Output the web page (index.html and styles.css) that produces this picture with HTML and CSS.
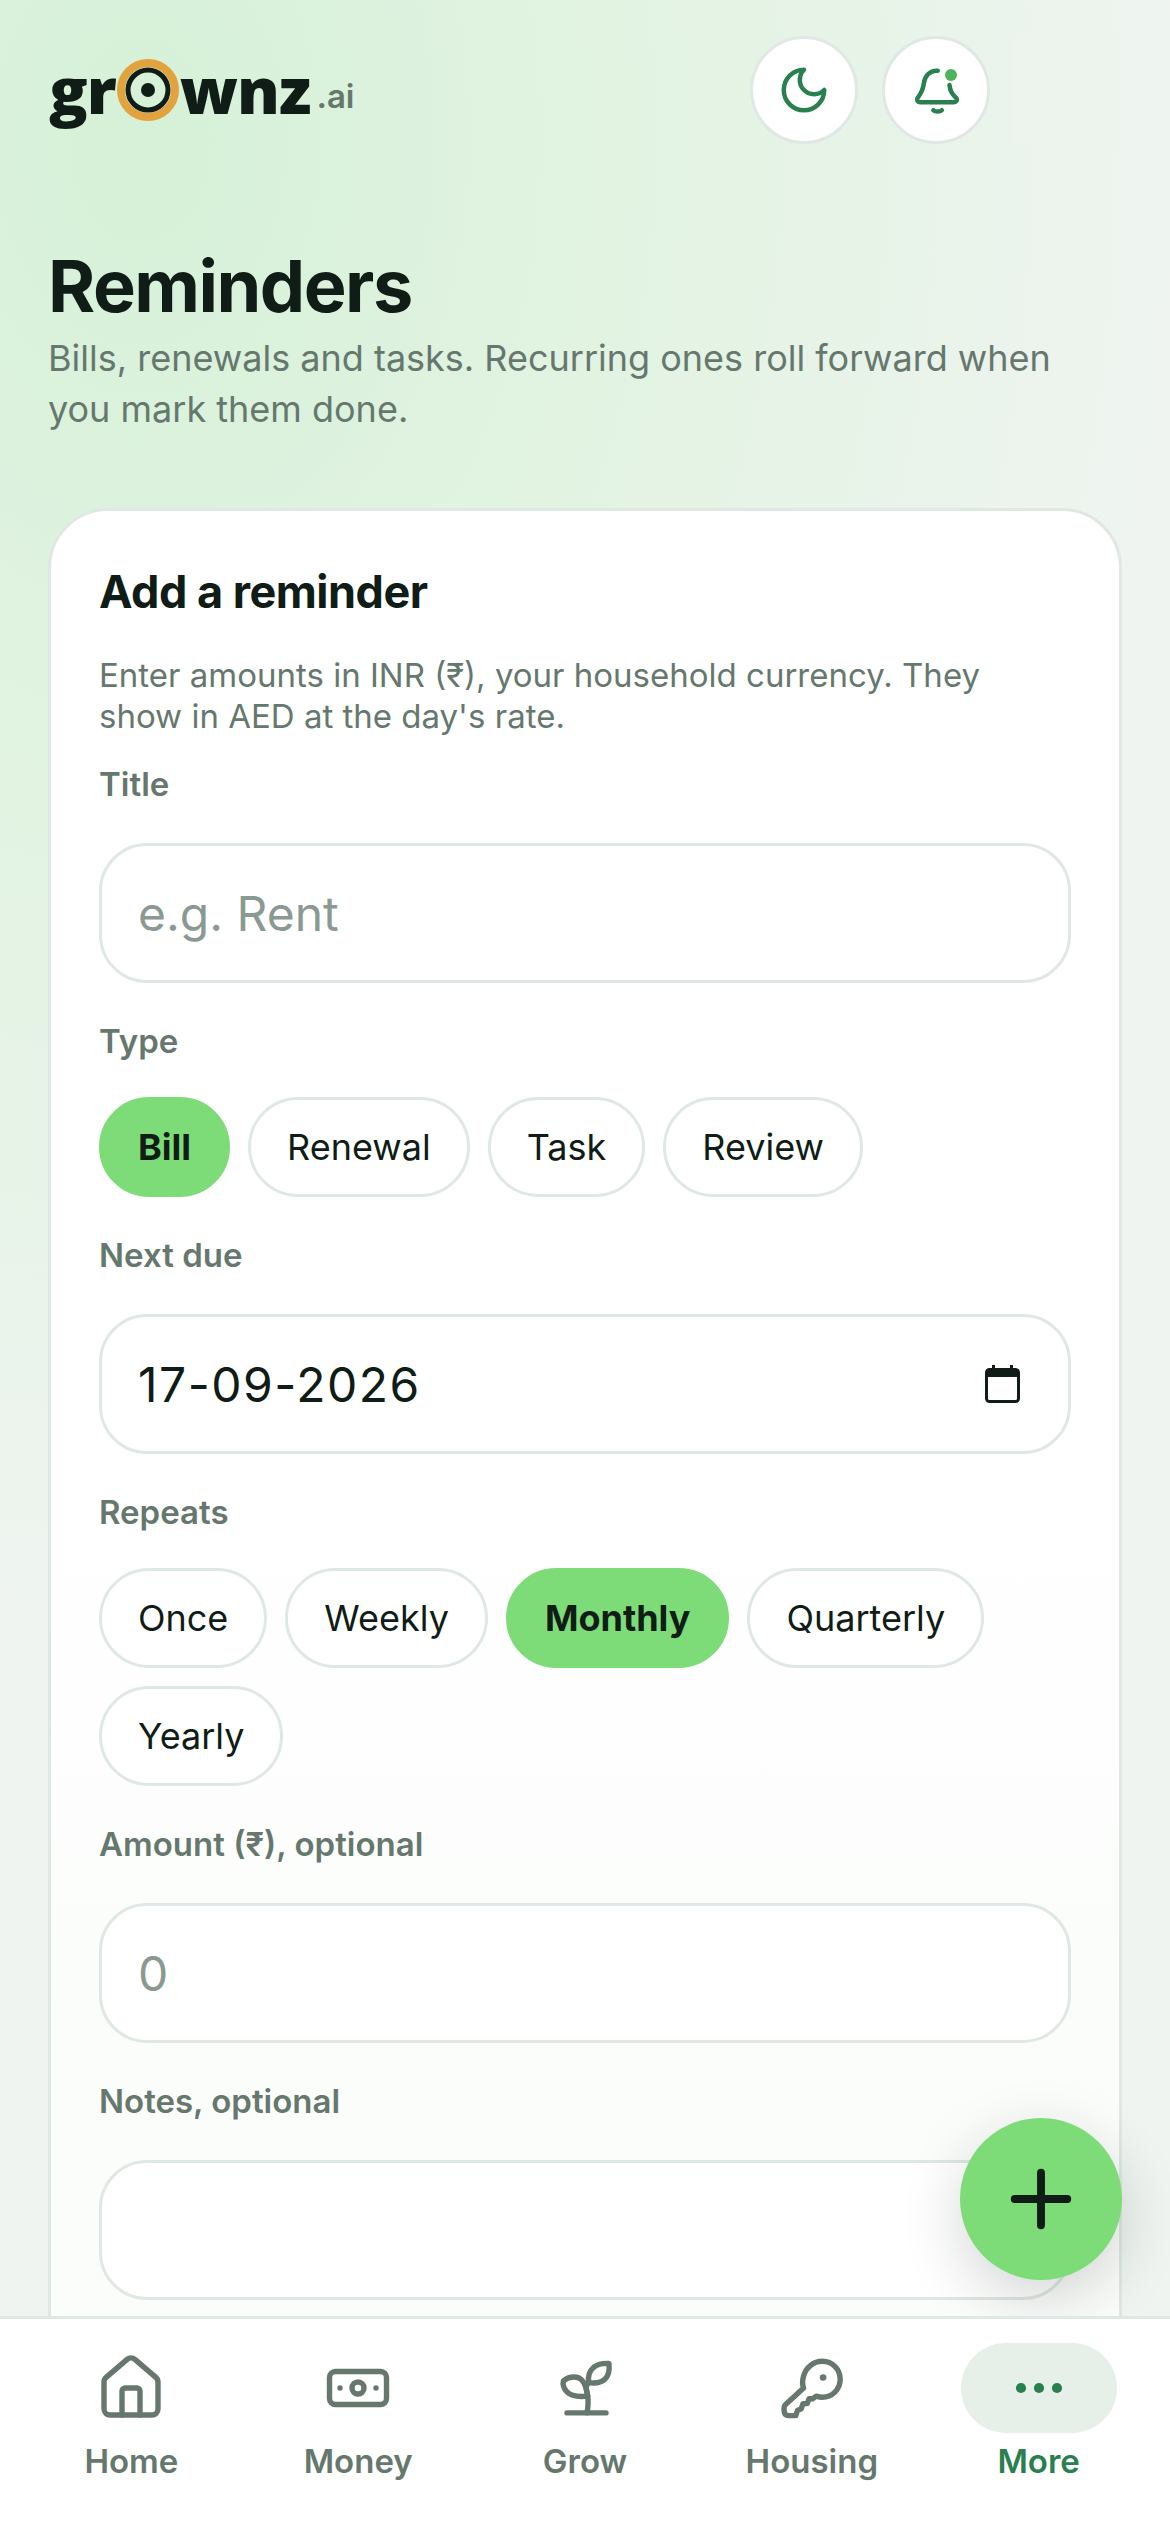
FILE: index.html
```html
<!DOCTYPE html>
<html>
<head>
    <title>Reminders</title>
    <link rel="stylesheet" href="styles.css">
</head>
<body>

<div class="page">
    <main class="content">
        <header class="topbar">
            <div class="logo">
                <span class="logo-word">gr</span>
                <svg class="logo-mark" viewBox="0 0 62 62">
                    <circle cx="31" cy="31" r="27" fill="none" stroke="#e2a33f" stroke-width="8"/>
                    <circle cx="31" cy="31" r="20" fill="none" stroke="#101c16" stroke-width="5"/>
                    <circle cx="31" cy="31" r="7" fill="#101c16"/>
                </svg>
                <span class="logo-word">wnz</span>
                <span class="logo-ai">.ai</span>
            </div>
            <div class="top-actions">
                <button class="round-btn">
                    <svg class="top-icon" viewBox="0 0 24 24"><path d="M12 3a6 6 0 0 0 9 9 9 9 0 1 1-9-9z"/></svg>
                </button>
                <button class="round-btn">
                    <svg class="top-icon" viewBox="0 0 24 24">
                        <path d="M12.8 3.4C9 3.2 7 6 6.6 9 6.2 12.5 5 14 3.8 15.6 3.2 16.5 3.8 17.4 4.8 17.4H20c1 0 1.7-.9 1-1.8-1.5-1.6-2.7-2.6-3-5.8"/>
                        <path d="M10.8 21c.8.8 3 .8 3.8 0"/>
                    </svg>
                    <span class="bell-dot"></span>
                </button>
                <div class="avatar"></div>
            </div>
        </header>

        <h1>Reminders</h1>
        <p class="subtitle">Bills, renewals and tasks. Recurring ones roll forward when you mark them done.</p>

        <section class="card">
            <h2>Add a reminder</h2>
            <p class="hint">Enter amounts in INR (₹), your household currency. They show in AED at the day's rate.</p>

            <label class="label label-first">Title</label>
            <input class="box" type="text" placeholder="e.g. Rent">

            <label class="label">Type</label>
            <div class="chips">
                <span class="chip chip-on">Bill</span>
                <span class="chip">Renewal</span>
                <span class="chip">Task</span>
                <span class="chip">Review</span>
            </div>

            <label class="label">Next due</label>
            <div class="box box-date">
                <span class="date-text">17-09-2026</span>
                <svg class="cal-icon" viewBox="0 0 35 38">
                    <rect x="7" y="0" width="3" height="6" fill="#101c16"/>
                    <rect x="25" y="0" width="3" height="6" fill="#101c16"/>
                    <rect x="1.5" y="4.5" width="32" height="32" rx="3" fill="none" stroke="#101c16" stroke-width="3"/>
                    <rect x="1.5" y="4" width="32" height="8" fill="#101c16"/>
                </svg>
            </div>

            <label class="label">Repeats</label>
            <div class="chips">
                <span class="chip">Once</span>
                <span class="chip">Weekly</span>
                <span class="chip chip-on">Monthly</span>
                <span class="chip">Quarterly</span>
                <span class="chip">Yearly</span>
            </div>

            <label class="label">Amount (₹), optional</label>
            <input class="box" type="text" placeholder="0">

            <label class="label">Notes, optional</label>
            <textarea class="box box-notes"></textarea>
        </section>

        <button class="fab">
            <svg viewBox="0 0 24 24"><path d="M5 12h14M12 5v14"/></svg>
        </button>
    </main>

    <nav class="tabbar">
        <a class="tab">
            <span class="tab-icon">
                <svg viewBox="0 0 24 24">
                    <path d="M15 21v-8a1 1 0 0 0-1-1h-4a1 1 0 0 0-1 1v8"/>
                    <path d="M3 10a2 2 0 0 1 .709-1.528l7-5.999a2 2 0 0 1 2.582 0l7 5.999A2 2 0 0 1 21 10v9a2 2 0 0 1-2 2H5a2 2 0 0 1-2-2z"/>
                </svg>
            </span>
            Home
        </a>
        <a class="tab">
            <span class="tab-icon">
                <svg viewBox="0 0 24 24">
                    <rect x="2.5" y="6.5" width="19" height="11" rx="2"/>
                    <circle cx="12" cy="12" r="2"/>
                    <path d="M6 12h.01M18 12h.01"/>
                </svg>
            </span>
            Money
        </a>
        <a class="tab">
            <span class="tab-icon">
                <svg viewBox="0 0 24 24">
                    <path d="M6 20.3h13"/>
                    <path d="M4.8 9.6c2-1.6 5-1.8 6.5.2 1.2 1.6 1.4 3.4 1.6 4.9-2.7.3-5.3.3-6.9-1.4-1-1.1-1.5-2.5-1.2-3.7z"/>
                    <path d="M13.2 10.2c-.3-2.4.4-4 1.8-5.2 1.3-1 3.2-1.3 5-1.2.2 2 0 4-1.4 5.3-1.3 1.2-3.4 1.4-5.4 1.1z"/>
                    <path d="M13.2 10.2c-1.5 1.8-.5 3-.3 4.5.3 2 .1 3.7-.2 5.6"/>
                </svg>
            </span>
            Grow
        </a>
        <a class="tab">
            <span class="tab-icon">
                <svg viewBox="0 0 24 24">
                    <path d="M9.2 12C8.7 10.8 8.8 9.4 9.2 8 10 5 12.6 3.1 15.4 3.1c3.5 0 6 2.7 6 6 0 3.4-2.7 6-6 6-.8 0-1.4-.2-2-.4l-1.2.9H11l-.6 1.6H9L8.4 19l-1.2.4-.6 1.8H4.2c-1 0-1.5-.6-1.5-1.6v-1c0-.5.2-.8.5-1.1z"/>
                    <circle class="key-dot" cx="15.7" cy="8.5" r="1.1"/>
                </svg>
            </span>
            Housing
        </a>
        <a class="tab tab-on">
            <span class="tab-icon">
                <svg viewBox="0 0 24 24">
                    <circle cx="6" cy="12" r="1.7"/>
                    <circle cx="12" cy="12" r="1.7"/>
                    <circle cx="18" cy="12" r="1.7"/>
                </svg>
            </span>
            More
        </a>
    </nav>
</div>

</body>
</html>
```

FILE: styles.css
```css
* {
    box-sizing: border-box;
}
body {
    margin: 0;
    font-family: Inter, "Noto Sans", sans-serif;
    color: #101c16;
    background: #fff;
}
.page {
    height: 100vh;
    display: flex;
    flex-direction: column;
    overflow: hidden;
}
.content {
    position: relative;
    flex: 1;
    min-height: 0;
    overflow: hidden;
    padding: 36px 48px 0;
    background: radial-gradient(ellipse 1050px 1500px at 12% 6%, #d6f1d8 0%, #e2f3e2 45%, #eff4f0 100%);
}

/* top bar */
.topbar {
    display: flex;
    justify-content: space-between;
    align-items: center;
}
.logo {
    display: flex;
    align-items: center;
    margin-left: 1px;
}
.logo-word {
    font-family: "Open Sans", sans-serif;
    font-weight: 800;
    font-size: 64px;
    line-height: 62px;
    letter-spacing: -1px;
}
.logo-mark {
    width: 62px;
    height: 62px;
    margin: 0 1px;
}
.logo-ai {
    font-size: 33px;
    font-weight: 600;
    color: #66786e;
    margin-left: 6px;
    margin-top: 12px;
}
.top-actions {
    display: flex;
    gap: 24px;
}
.round-btn {
    position: relative;
    width: 108px;
    height: 108px;
    padding: 0;
    border: 3px solid #dfe8e2;
    border-radius: 50%;
    background: #fff;
    display: flex;
    align-items: center;
    justify-content: center;
}
.top-icon {
    width: 54px;
    height: 54px;
    fill: none;
    stroke: #2a7f4e;
    stroke-width: 2;
    stroke-linecap: round;
    stroke-linejoin: round;
}
.bell-dot {
    position: absolute;
    top: 30px;
    right: 30px;
    width: 12px;
    height: 12px;
    border-radius: 50%;
    background: #4cb45c;
}
.avatar {
    position: relative;
    width: 108px;
    height: 108px;
    background: #edf4ee;
}
.avatar::before {
    content: "";
    position: absolute;
    inset: -3px;
    border-radius: 50%;
    background: #dfe8e2;
    z-index: -1;
}

/* heading */
h1 {
    margin: 102px 0 0;
    font-size: 72px;
    line-height: 79px;
    font-weight: 700;
    letter-spacing: -1.5px;
}
.subtitle {
    margin: 8px 0 0;
    font-size: 36px;
    line-height: 51px;
    color: #66786e;
}

/* card */
.card {
    margin-top: 73px;
    padding: 54px 48px 60px;
    height: 2000px;
    border: 3px solid #dfe8e2;
    border-radius: 60px;
    background: linear-gradient(#fff 0, #fff 900px, #fbfdfb 1500px);
}
h2 {
    margin: 0;
    font-size: 45px;
    line-height: 54px;
    font-weight: 700;
    letter-spacing: -.5px;
}
.hint {
    margin: 36px 0 0;
    font-size: 33px;
    line-height: 41px;
    color: #66786e;
}
.label {
    display: block;
    margin: 36px 0 36px;
    font-size: 33px;
    line-height: 45px;
    font-weight: 600;
    color: #66786e;
}
.label-first {
    margin-top: 25px;
}
.box {
    display: block;
    width: 100%;
    height: 140px;
    padding: 0 36px;
    border: 3px solid #dfe8e2;
    border-radius: 48px;
    background: #fff;
    font-family: Inter, sans-serif;
    font-size: 48px;
    color: #101c16;
    outline: none;
}
.box::placeholder {
    color: #8a9a92;
}
.box-date {
    display: flex;
    align-items: center;
    justify-content: space-between;
    padding-right: 48px;
}
.date-text {
    letter-spacing: 1.5px;
}
.cal-icon {
    width: 35px;
    height: 38px;
}
.box-notes {
    resize: none;
}

/* chips */
.chips {
    display: flex;
    flex-wrap: wrap;
    gap: 18px;
    margin-top: -3px;
}
.chip {
    display: flex;
    align-items: center;
    height: 100px;
    padding: 0 36px;
    border: 3px solid #dfe8e2;
    border-radius: 50px;
    background: #fff;
    font-size: 36px;
}
.chip-on {
    background: #7ddc78;
    border-color: #7ddc78;
    font-weight: 700;
}

/* add button */
.fab {
    position: absolute;
    right: 48px;
    bottom: 36px;
    width: 162px;
    height: 162px;
    padding: 0;
    border: none;
    border-radius: 50%;
    background: #7ddc78;
    box-shadow: 0 18px 60px rgba(16, 28, 22, .18);
    display: flex;
    align-items: center;
    justify-content: center;
    z-index: 2;
}
.fab svg {
    width: 90px;
    height: 90px;
    fill: none;
    stroke: #101c16;
    stroke-width: 2.1;
    stroke-linecap: round;
}

/* bottom tabs */
.tabbar {
    flex: none;
    height: 216px;
    padding: 24px 18px 0;
    border-top: 3px solid #dfe8e2;
    background: #fff;
    display: grid;
    grid-template-columns: repeat(5, 1fr);
}
.tab {
    display: flex;
    flex-direction: column;
    align-items: center;
    font-size: 33px;
    line-height: 45px;
    font-weight: 600;
    color: #66786e;
}
.tab-icon {
    width: 156px;
    height: 90px;
    margin-bottom: 6px;
    border-radius: 45px;
    display: flex;
    align-items: center;
    justify-content: center;
}
.tab-icon svg {
    width: 72px;
    height: 72px;
    fill: none;
    stroke: #66786e;
    stroke-width: 1.8;
    stroke-linecap: round;
    stroke-linejoin: round;
}
.tab-icon .key-dot {
    fill: #66786e;
    stroke: none;
}
.tab-on {
    color: #2a7f4e;
}
.tab-on .tab-icon {
    background: #e6f0e8;
}
.tab-on .tab-icon svg {
    fill: #2a7f4e;
    stroke: none;
}
```
